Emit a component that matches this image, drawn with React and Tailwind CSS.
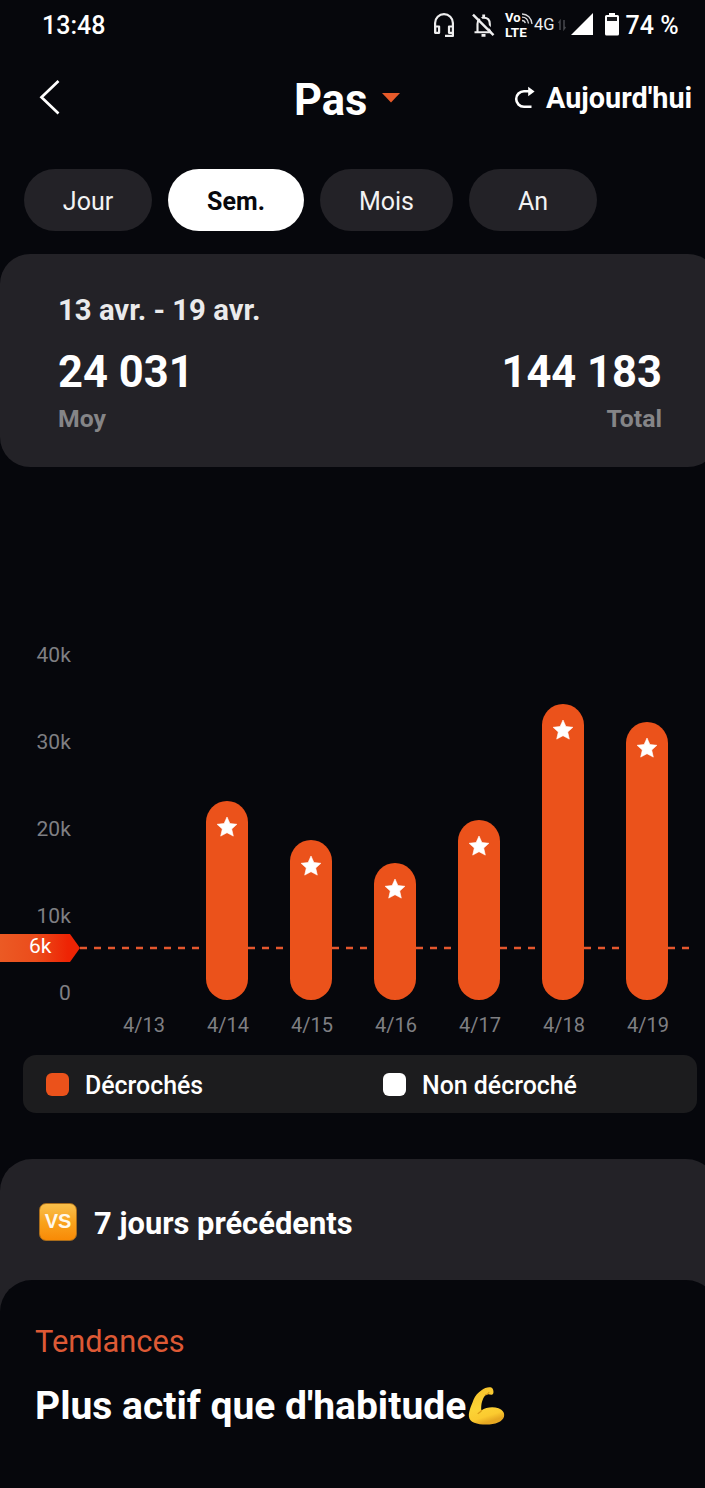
import React from "react";

const tabs = [
  { label: "Jour", box: "w-[128px] bg-[#232227] text-[#f2f2f3]" },
  { label: "Sem.", box: "w-[136px] bg-white font-bold text-[#08080c]" },
  { label: "Mois", box: "w-[133px] bg-[#232227] text-[#f2f2f3]" },
  { label: "An", box: "w-[128px] bg-[#232227] text-[#f2f2f3]" },
];

const days = [
  { label: "4/13", height: 0 },
  { label: "4/14", height: 199.5 },
  { label: "4/15", height: 160.3 },
  { label: "4/16", height: 137 },
  { label: "4/17", height: 180.3 },
  { label: "4/18", height: 296 },
  { label: "4/19", height: 278 },
];

function StatusBar() {
  return (
    <div className="flex h-[50px] items-center pl-[42px] text-white">
      <span className="w-[390px] pt-px text-[25px] font-medium leading-none">13:48</span>
      <svg width="24" height="28" viewBox="0 0 24 28" fill="none" stroke="#eeeeef" strokeWidth="2.200">
        <path d="M3.100 21V12a8.900 8.900 0 0 1 17.800 0V24.900H13" strokeLinejoin="round" />
        <path d="M3.100 15.500h4v6.300h-4zM21 15.500h-4v6.300h4" strokeLinejoin="round" />
      </svg>
      <svg className="ml-[15px]" width="25" height="28" viewBox="0 0 25 28" fill="none" stroke="#eeeeef" strokeWidth="2.100">
        <path d="M6.500 21V13c0-4 2.500-6.200 6.300-6.200s6 2.200 6 6.200v8M3.500 21.200h17" />
        <path d="M12.700 3.500V7M10.500 24.300h4" strokeWidth="2.800" />
        <path d="M4.500 2.200l20 20" stroke="#06070c" strokeWidth="2" />
        <path d="M2 3.700l20.500 20.500" strokeWidth="2.400" />
      </svg>
      <div className="ml-[9px] flex w-[29px] flex-col text-[13px] font-bold leading-[14px]">
        <div className="flex h-[14px]">
          <span className="text-[13px]">Vo</span>
          <svg className="mt-[2px]" width="12" height="12" viewBox="0 0 12 12" fill="none" stroke="#d8d8da" strokeWidth="1.300">
            <path d="M1 1c5.500 0 9.500 4 10 10M1 4.200c3.500 0 6 2.500 6.500 6.300M1 7.500c1.700 0 2.900 1 3.300 2.700" />
          </svg>
        </div>
        <span className="text-[13.500px] leading-[15px]">LTE</span>
      </div>
      <span className="text-[16.500px] leading-none text-[#f0f0f1]">4G</span>
      <svg className="ml-[3px]" width="8" height="12" viewBox="0 0 8 12" fill="none" stroke="#47484d" strokeWidth="1.500">
        <path d="M2 11V2L.5 4M6 1v9l1.500-2" />
      </svg>
      <svg className="ml-[5px] mb-[2px]" width="22" height="22" viewBox="0 0 22 22" fill="#fff">
        <path d="M22 0V22H0z" />
      </svg>
      <svg className="ml-[12px] mb-[3px]" width="14" height="24" viewBox="0 0 14 24" fill="#fff">
        <path d="M4 1h6v2h2.500Q14 3 14 4.500V22q0 1.500-1.500 1.500h-11Q0 23.500 0 22V4.500Q0 3 1.500 3H4z" />
        <path d="M2 5h10v4H2z" fill="#1b1c20" />
      </svg>
      <span className="ml-[7px] whitespace-nowrap pt-px text-[25px] font-medium leading-none">74 %</span>
    </div>
  );
}

function Header() {
  return (
    <div className="flex h-[119px] pt-[18px] text-white">
      <div className="flex h-[60px] w-[294px] items-center pb-[2px] pl-[39px]">
        <svg width="22" height="36" viewBox="0 0 22 36" fill="none" stroke="#fff" strokeWidth="2.700">
          <path d="M19.500 2L2.500 18.300L19.500 34.500" />
        </svg>
      </div>
      <div className="flex h-[60px] w-[220px] items-center">
        <span className="w-[88px] pt-[5px] text-[43.500px] font-bold leading-none">Pas</span>
        <svg className="mb-px" width="18" height="10" viewBox="0 0 18 10" fill="#e65a2a">
          <path d="M0 0h18L9 9.500z" />
        </svg>
      </div>
      <div className="flex h-[60px] items-center whitespace-nowrap">
        <svg width="22" height="24" viewBox="0 0 22 24" fill="none" stroke="#fff" strokeWidth="2.600">
          <path d="M17.500 20.800H10a7.800 7.800 0 0 1 0-15.600H15" />
          <path d="M14.200 .8L20.600 5.400l-6.400 4.800z" fill="#fff" stroke="none" />
        </svg>
        <span className="ml-[10px] pt-px text-[28.800px] font-bold leading-none">Aujourd'hui</span>
      </div>
    </div>
  );
}

function Summary() {
  return (
    <section className="mt-[23px] h-[213px] w-[718px] rounded-[30px] bg-[#232227] pl-[58px] pr-[56px] pt-[39px] font-bold">
      <p className="text-[29.300px] leading-[34px] text-[#eaeaeb]">13 avr. - 19 avr.</p>
      <div className="mt-[19px] flex justify-between text-[43.500px] leading-[54px] text-white">
        <span>24 031</span>
        <span>144 183</span>
      </div>
      <div className="mt-[3px] flex justify-between text-[24.800px] leading-[32px] text-[#858587]">
        <span>Moy</span>
        <span>Total</span>
      </div>
    </section>
  );
}

function Bar({ label, height }) {
  return (
    <div className="flex w-[84px] flex-col items-center justify-end">
      {height > 0 && (
        <div className="flex w-[42px] justify-center rounded-full bg-[#eb521b] pt-[14px]" style={{ height }}>
          <svg width="24" height="24" viewBox="0 0 24 24" fill="#fff" stroke="#fff" strokeWidth="0.600" strokeLinejoin="round">
            <path d="M12 2l2.900 6.500 7 .8-5.200 4.700 1.600 7.100L12 17.700l-6.300 3.400 1.600-7.100L2.100 9.300l7-.8z" />
          </svg>
        </div>
      )}
      <span className="mt-[10px] h-[30px] pl-[2px] text-[20px] leading-[30px] text-[#7f7f83]">{label}</span>
    </div>
  );
}

function Chart() {
  return (
    <section className="relative flex h-[588px] pt-[173px] text-[21px]">
      <div className="flex w-[71px] flex-col text-right leading-[30px] tracking-[0.100px] text-[#7f7f83]">
        <span className="h-[87px]">40k</span>
        <span className="h-[87px]">30k</span>
        <span className="h-[87px]">20k</span>
        <span className="h-[77px]">10k</span>
        <span>0</span>
      </div>
      <svg className="absolute left-0 top-[467px]" width="705" height="28" viewBox="0 0 705 28">
        <defs>
          <linearGradient id="goal">
            <stop offset="0" stopColor="#eb5a24" />
            <stop offset="0.45" stopColor="#eb4c1b" />
            <stop offset="0.85" stopColor="#ee2404" />
            <stop offset="1" stopColor="#ee2404" />
          </linearGradient>
        </defs>
        <path d="M0 0H70L80 14L70 28H0z" fill="url(#goal)" />
        <path d="M80 14H690" stroke="#e4572e" strokeWidth="2.300" strokeDasharray="7 7" />
      </svg>
      <span className="absolute left-[29px] top-[465px] text-[21px] leading-[28px] text-white">6k</span>
      <div className="relative ml-[30px] flex h-[400px]">
        {days.map((day) => (
          <Bar key={day.label} {...day} />
        ))}
      </div>
    </section>
  );
}

function Legend() {
  return (
    <div className="ml-[23px] flex h-[58px] w-[674px] items-center rounded-[13px] bg-[#1c1c1e] pl-[23px] text-[24.900px] font-medium text-white">
      <div className="flex w-[337px] items-center gap-4">
        <i className="size-[23px] rounded-[6px] bg-[#eb521b]" />
        <span className="pt-[4px] leading-[32px]">Décrochés</span>
      </div>
      <div className="flex items-center gap-4">
        <i className="size-[23px] rounded-[6px] bg-white" />
        <span className="pt-[4px] leading-[32px]">Non décroché</span>
      </div>
    </div>
  );
}

function Biceps() {
  return (
    <svg className="ml-[2px]" width="38" height="42" viewBox="0 0 38 42">
      <defs>
        <linearGradient id="skin" x1="0" y1="0" x2="0.3" y2="1">
          <stop offset="0" stopColor="#f5c02c" />
          <stop offset="0.6" stopColor="#fcd336" />
          <stop offset="0.85" stopColor="#fbca2f" />
          <stop offset="1" stopColor="#e6a822" />
        </linearGradient>
      </defs>
      <path
        d="M13.500 5.200C16.500 2.800 21 1.500 23.400 2.600c1.900 1 2.300 3.700 2 5.300-.3 1.600-2.100 2.100-3.700 1.700-1.600-.5-2.700-.6-4.200.4-3.200 3.700-4.700 9.300-4.200 15.500 4.600-3.400 12-4.200 17.200-2.200 4.300 1.700 6.400 4.800 5.500 8.400-1.500 4.900-8.600 7.900-17.800 7.900C9 39.600 1.300 37.400.9 31.500.6 25.500 3.500 20.500 5.500 14.700c1.900-4.200 4.400-7 8-9.500z"
        fill="url(#skin)"
      />
      <path d="M13.600 25.500c-1 1.200-2 2.200-3.500 3M17.500 9.800c1.800-.4 3-1.100 3.400-2.500" fill="none" stroke="#d99a16" strokeWidth="1.200" strokeLinecap="round" />
    </svg>
  );
}

function Comparison() {
  return (
    <section className="mt-[46px] w-[718px] rounded-t-[32px] bg-[#232227]">
      <div className="flex h-[121px] items-center pl-[39px] pt-[4px]">
        <div className="flex size-[38px] items-center justify-center rounded-[7px] border border-[#a86c1b] bg-linear-to-b from-[#f9c04a] via-[#f9a31c] to-[#f88a05] pb-px font-[Liberation_Sans] text-[20px] font-bold leading-none text-[#fff8ea]">
          VS
        </div>
        <span className="ml-[17px] pt-[5px] text-[30.900px] font-bold leading-none text-white">7 jours précédents</span>
      </div>
      <div className="h-[208px] rounded-t-[32px] bg-[#06070c] pl-[35px] pt-[42px]">
        <p className="text-[30.800px] leading-[40px] text-[#dd5935]">Tendances</p>
        <div className="mt-[19px] flex h-[50px] items-center whitespace-nowrap text-[39px] font-bold leading-[50px] text-white">
          <span>Plus actif que d'habitude</span>
          <Biceps />
        </div>
      </div>
    </section>
  );
}

export default function App() {
  return (
    <main className="h-[1488px] w-[705px] overflow-hidden bg-[#06070c] font-[Roboto,sans-serif]">
      <StatusBar />
      <Header />
      <nav className="flex gap-4 pl-6">
        {tabs.map(({ label, box }) => (
          <button key={label} className={`h-[62px] rounded-full pt-[3px] text-[25px] ${box}`}>
            {label}
          </button>
        ))}
      </nav>
      <Summary />
      <Chart />
      <Legend />
      <Comparison />
    </main>
  );
}
